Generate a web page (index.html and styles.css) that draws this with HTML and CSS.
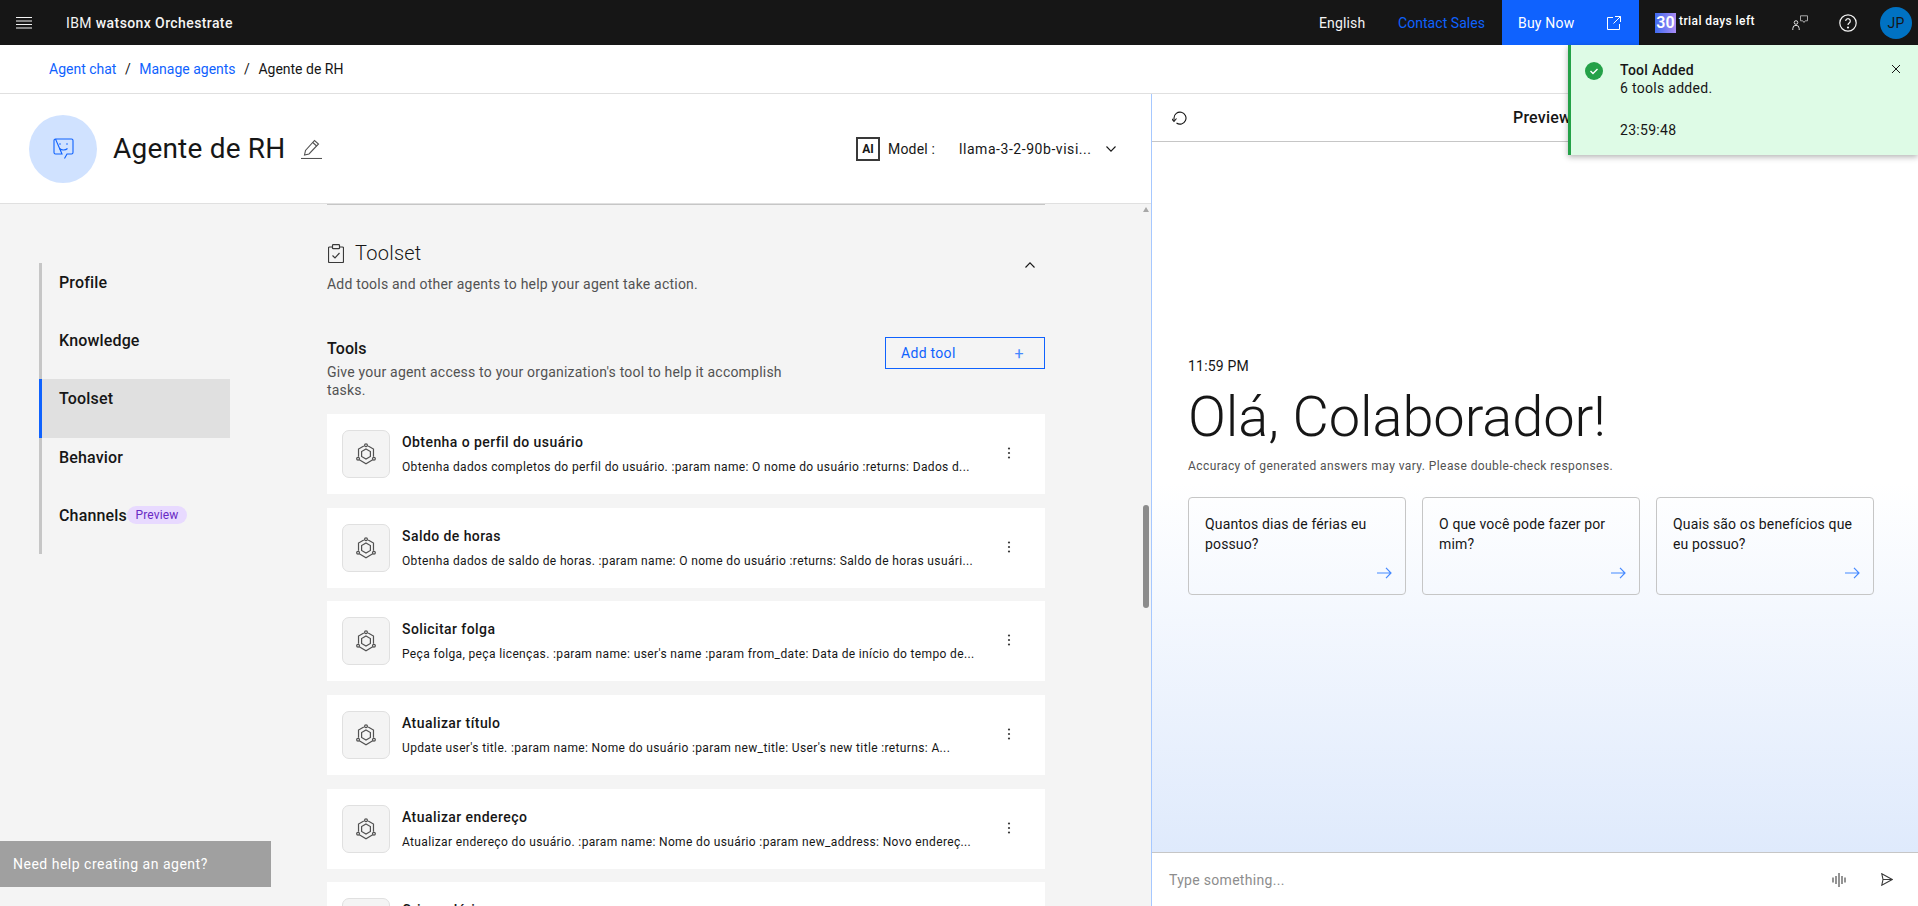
FILE: index.html
```html
<!DOCTYPE html>
<html lang="en">
<head>
<meta charset="utf-8">
<title>Agente de RH</title>
<link rel="stylesheet" href="styles.css">
</head>
<body>
<header class="topbar">
  <svg class="hamburger" width="16" height="12" viewBox="0 0 16 12"><path d="M0 .5h16M0 4h16M0 7.500h16M0 11h16" stroke="#f4f4f4" stroke-width="1"/></svg>
  <div class="brand">IBM <b>watsonx Orchestrate</b></div>
  <div class="top-right">
    <span class="lang">English</span>
    <span class="contact">Contact Sales</span>
    <div class="buy"><span>Buy Now</span>
      <svg width="14" height="14" viewBox="0 0 14 14" fill="none" stroke="#fff"><path d="M6 1.500H.5v12h12V8M8 .5h5.500V6M13.500 .5 6.500 7.500"/></svg>
    </div>
    <div class="trial"><span class="days">30</span><span class="trial-text">trial days left</span></div>
    <svg class="ic-people" width="16" height="16" viewBox="0 0 16 16" fill="none" stroke="#e0e0e0"><circle cx="4" cy="7.500" r="1.800"/><path d="M.8 15v-1.500a3.200 3.200 0 0 1 6.400 0V15"/><path d="M8.500 .8h7v5h-2.300L12 7.500l-1.200-1.700H8.500z" stroke="#a8a8a8"/></svg>
    <svg class="ic-help" width="18" height="18" viewBox="0 0 18 18" fill="none" stroke="#f4f4f4" stroke-width="1.200"><circle cx="9" cy="9" r="8.200"/><path d="M6.700 7a2.300 2.300 0 1 1 3.500 2c-.8.500-1.200 1-1.200 2"/><circle cx="9" cy="13.500" r=".5" fill="#f4f4f4"/></svg>
    <div class="avatar">JP</div>
  </div>
</header>

<nav class="crumbs">
  <a>Agent chat</a><i>/</i><a>Manage agents</a><i>/</i><span>Agente de RH</span>
</nav>

<main class="split">
  <section class="editor">
    <div class="agent-head">
      <div class="agent-badge">
        <svg width="21" height="21" viewBox="0 0 21 21" fill="none" stroke="#0f62fe" stroke-width="1.100"><path d="M2.500 1h16A1.500 1.500 0 0 1 20 2.500v12a1.500 1.500 0 0 1-1.500 1.500H14l-2.500 4.500M9 16H2.500A1.500 1.500 0 0 1 1 14.500v-12A1.500 1.500 0 0 1 2.500 1z"/><path d="M6.500 10.500c2 2 6 2 8 0"/><circle cx="7" cy="6" r=".8" fill="#0f62fe" stroke="none"/><circle cx="14" cy="6" r=".8" fill="#0f62fe" stroke="none"/></svg>
      </div>
      <h1>Agente de RH</h1>
      <svg class="pen" width="21" height="20" viewBox="0 0 21 20" fill="none" stroke="#525252" stroke-width="1.100"><path d="M0 19.500h21"/><path d="M3.500 16l1-4.500L13.500 1.500 17.500 5 8 15z"/><path d="M11.800 3.500l3.800 3.500"/></svg>
      <div class="model">
        <span class="ai">AI</span>
        <span class="model-label">Model :</span>
        <span class="model-name">llama-3-2-90b-visi...</span>
        <svg width="10" height="6" viewBox="0 0 10 6" fill="none" stroke="#161616" stroke-width="1.100"><path d="M.5.5 5 5.200 9.500.5"/></svg>
      </div>
    </div>

    <div class="editor-body">
      <aside class="side">
        <ul class="side-nav">
          <li>Profile</li>
          <li>Knowledge</li>
          <li class="active">Toolset</li>
          <li>Behavior</li>
          <li>Channels<span class="tag">Preview</span></li>
        </ul>
      </aside>

      <div class="column">
        <div class="sec-head">
          <div class="sec-title">
            <svg width="16" height="19" viewBox="0 0 16 19" fill="none" stroke="#393939" stroke-width="1.200"><path d="M4.500 3H1.500a1 1 0 0 0-1 1v13.500a1 1 0 0 0 1 1h13a1 1 0 0 0 1-1V4a1 1 0 0 0-1-1h-3"/><rect x="4.500" y=".7" width="7" height="4" rx=".8"/><path d="m4.500 11.500 2.500 2.500 4.500-5"/></svg>
            <h2>Toolset</h2>
            <svg class="collapse" width="10" height="6" viewBox="0 0 10 6" fill="none" stroke="#161616" stroke-width="1.100"><path d="M.5 5.500 5 .8l4.500 4.700"/></svg>
          </div>
          <p class="muted">Add tools and other agents to help your agent take action.</p>
        </div>

        <div class="tools-head">
          <div class="tools-intro">
            <h3>Tools</h3>
            <p class="muted">Give your agent access to your organization's tool to help it accomplish tasks.</p>
          </div>
          <button class="add-btn"><span>Add tool</span><em>+</em></button>
        </div>

        <div class="cards">
          <article class="card">
            <div class="tool-ic"><svg width="22" height="22" viewBox="0 0 20 20" fill="none" stroke="#525252" stroke-width="1.100"><path d="M10 5.500 14 7.800v4.400L10 14.500 6 12.200V7.800z"/><path d="M8 2.800 3.200 5.500v7M12 2.800l4.800 2.700v7M3.900 15.300 10 18.800l6.100-3.500"/><circle cx="10" cy="2" r="1.300"/><circle cx="2.800" cy="14.300" r="1.300"/><circle cx="17.200" cy="14.300" r="1.300"/></svg></div>
            <div class="card-text"><h4>Obtenha o perfil do usuário</h4><p>Obtenha dados completos do perfil do usuário. :param name: O nome do usuário :returns: Dados d...</p></div>
            <svg class="kebab" width="4" height="12" viewBox="0 0 4 12" fill="#393939"><circle cx="2" cy="1.500" r="1.100"/><circle cx="2" cy="6" r="1.100"/><circle cx="2" cy="10.500" r="1.100"/></svg>
          </article>
          <article class="card">
            <div class="tool-ic"><svg width="22" height="22" viewBox="0 0 20 20" fill="none" stroke="#525252" stroke-width="1.100"><path d="M10 5.500 14 7.800v4.400L10 14.500 6 12.200V7.800z"/><path d="M8 2.800 3.200 5.500v7M12 2.800l4.800 2.700v7M3.900 15.300 10 18.800l6.100-3.500"/><circle cx="10" cy="2" r="1.300"/><circle cx="2.800" cy="14.300" r="1.300"/><circle cx="17.200" cy="14.300" r="1.300"/></svg></div>
            <div class="card-text"><h4>Saldo de horas</h4><p>Obtenha dados de saldo de horas. :param name: O nome do usuário :returns: Saldo de horas usuári...</p></div>
            <svg class="kebab" width="4" height="12" viewBox="0 0 4 12" fill="#393939"><circle cx="2" cy="1.500" r="1.100"/><circle cx="2" cy="6" r="1.100"/><circle cx="2" cy="10.500" r="1.100"/></svg>
          </article>
          <article class="card">
            <div class="tool-ic"><svg width="22" height="22" viewBox="0 0 20 20" fill="none" stroke="#525252" stroke-width="1.100"><path d="M10 5.500 14 7.800v4.400L10 14.500 6 12.200V7.800z"/><path d="M8 2.800 3.200 5.500v7M12 2.800l4.800 2.700v7M3.900 15.300 10 18.800l6.100-3.500"/><circle cx="10" cy="2" r="1.300"/><circle cx="2.800" cy="14.300" r="1.300"/><circle cx="17.200" cy="14.300" r="1.300"/></svg></div>
            <div class="card-text"><h4>Solicitar folga</h4><p>Peça folga, peça licenças. :param name: user's name :param from_date: Data de início do tempo de...</p></div>
            <svg class="kebab" width="4" height="12" viewBox="0 0 4 12" fill="#393939"><circle cx="2" cy="1.500" r="1.100"/><circle cx="2" cy="6" r="1.100"/><circle cx="2" cy="10.500" r="1.100"/></svg>
          </article>
          <article class="card">
            <div class="tool-ic"><svg width="22" height="22" viewBox="0 0 20 20" fill="none" stroke="#525252" stroke-width="1.100"><path d="M10 5.500 14 7.800v4.400L10 14.500 6 12.200V7.800z"/><path d="M8 2.800 3.200 5.500v7M12 2.800l4.800 2.700v7M3.900 15.300 10 18.800l6.100-3.500"/><circle cx="10" cy="2" r="1.300"/><circle cx="2.800" cy="14.300" r="1.300"/><circle cx="17.200" cy="14.300" r="1.300"/></svg></div>
            <div class="card-text"><h4>Atualizar título</h4><p>Update user's title. :param name: Nome do usuário :param new_title: User's new title :returns: A...</p></div>
            <svg class="kebab" width="4" height="12" viewBox="0 0 4 12" fill="#393939"><circle cx="2" cy="1.500" r="1.100"/><circle cx="2" cy="6" r="1.100"/><circle cx="2" cy="10.500" r="1.100"/></svg>
          </article>
          <article class="card">
            <div class="tool-ic"><svg width="22" height="22" viewBox="0 0 20 20" fill="none" stroke="#525252" stroke-width="1.100"><path d="M10 5.500 14 7.800v4.400L10 14.500 6 12.200V7.800z"/><path d="M8 2.800 3.200 5.500v7M12 2.800l4.800 2.700v7M3.900 15.300 10 18.800l6.100-3.500"/><circle cx="10" cy="2" r="1.300"/><circle cx="2.800" cy="14.300" r="1.300"/><circle cx="17.200" cy="14.300" r="1.300"/></svg></div>
            <div class="card-text"><h4>Atualizar endereço</h4><p>Atualizar endereço do usuário. :param name: Nome do usuário :param new_address: Novo endereç...</p></div>
            <svg class="kebab" width="4" height="12" viewBox="0 0 4 12" fill="#393939"><circle cx="2" cy="1.500" r="1.100"/><circle cx="2" cy="6" r="1.100"/><circle cx="2" cy="10.500" r="1.100"/></svg>
          </article>
          <article class="card">
            <div class="tool-ic"></div>
            <div class="card-text"><h4>Criar salário</h4><p></p></div>
          </article>
        </div>
      </div>
      <div class="scroll-up"></div>
      <div class="scroll-thumb"></div>
      <button class="help-btn">Need help creating an agent?</button>
    </div>
  </section>

  <section class="preview">
    <div class="preview-head">
      <svg width="15" height="15" viewBox="0 0 15 15" fill="none" stroke="#161616" stroke-width="1.100"><path d="M4.500 13a6 6 0 1 0-2.500-5v3"/><path d="M-.5 8.500 2 11.500 4.500 8.500"/></svg>
      <span>Preview</span>
    </div>
    <div class="chat">
      <div class="time">11:59 PM</div>
      <div class="hello">Olá, Colaborador!</div>
      <p class="notice">Accuracy of generated answers may vary. Please double-check responses.</p>
      <div class="prompts">
        <div class="prompt">Quantos dias de férias eu possuo?<svg width="15" height="12" viewBox="0 0 15 12" fill="none" stroke="#4589ff" stroke-width="1.200"><path d="M0 6h14M9 .8 14 6 9 11.200"/></svg></div>
        <div class="prompt">O que você pode fazer por mim?<svg width="15" height="12" viewBox="0 0 15 12" fill="none" stroke="#4589ff" stroke-width="1.200"><path d="M0 6h14M9 .8 14 6 9 11.200"/></svg></div>
        <div class="prompt">Quais são os benefícios que eu possuo?<svg width="15" height="12" viewBox="0 0 15 12" fill="none" stroke="#4589ff" stroke-width="1.200"><path d="M0 6h14M9 .8 14 6 9 11.200"/></svg></div>
      </div>
    </div>
    <div class="composer">
      <span class="placeholder">Type something...</span>
      <svg class="voice" width="14" height="14" viewBox="0 0 14 14" stroke="#7a7a7a" stroke-width="1.600"><path d="M1 4.500v5M4 3v8M7 0v14M10 3v8M13 4.500v5"/></svg>
      <svg class="send" width="12" height="13" viewBox="0 0 12 13" fill="none" stroke="#393939" stroke-width="1.100"><path d="M.8.8 11.300 6.500.8 12.200 2 6.500zM2 6.500h9.300"/></svg>
    </div>
  </section>
</main>

<aside class="toast">
  <svg class="toast-check" width="18" height="18" viewBox="0 0 18 18"><circle cx="9" cy="9" r="9" fill="#24a148"/><path d="m5.500 9 2.500 2.500 4.500-4.500" fill="none" stroke="#fff" stroke-width="1.400"/></svg>
  <div class="toast-body">
    <strong>Tool Added</strong>
    <span>6 tools added.</span>
    <time>23:59:48</time>
  </div>
  <svg class="toast-close" width="10" height="10" viewBox="0 0 10 10" stroke="#161616" stroke-width="1"><path d="M1 1l8 8M9 1 1 9"/></svg>
</aside>
</body>
</html>
```

FILE: styles.css
```css
* { box-sizing: border-box; }
html, body { margin: 0; height: 100%; }
body {
  display: flex;
  flex-direction: column;
  height: 906px;
  overflow: hidden;
  font-family: Roboto, "Noto Sans", sans-serif;
  color: #161616;
  background: #fff;
  font-size: 14px;
  letter-spacing: .2px;
}
h1, h2, h3, h4, p, ul { margin: 0; padding: 0; font-weight: 400; }

.topbar {
  flex: 0 0 45px;
  display: flex;
  align-items: center;
  background: #161616;
  color: #f4f4f4;
  padding-left: 16px;
}
.hamburger { flex: none; }
.brand { margin-left: 34px; font-size: 14px; letter-spacing: .4px; }
.brand b { font-weight: 500; }
.top-right { margin-left: auto; display: flex; align-items: center; height: 100%; }
.lang { width: 45px; white-space: nowrap; letter-spacing: .15px; }
.contact { margin-left: 34px; width: 87px; color: #0f62fe; white-space: nowrap; letter-spacing: .05px; }
.buy {
  margin-left: 17px;
  width: 137px;
  height: 100%;
  background: #0f62fe;
  color: #fff;
  display: flex;
  align-items: center;
  justify-content: space-between;
  padding: 0 18px 0 16px;
}
.trial { margin-left: 16px; display: flex; align-items: flex-start; width: 100px; }
.days {
  width: 22px;
  height: 20px;
  background: linear-gradient(90deg, #3f6bf0, #a98bf5);
  color: #fff;
  font-size: 16px;
  font-weight: 600;
  text-align: center;
  line-height: 20px;
  letter-spacing: 0;
}
.trial-text { margin-left: 3px; font-size: 12px; line-height: 16px; white-space: nowrap; color: #fff; font-weight: 500; letter-spacing: .42px; }
.ic-people { margin-left: 37px; }
.ic-help { margin-left: 31px; }
.avatar {
  margin-left: 23px;
  margin-right: 6px;
  width: 32px;
  height: 32px;
  border-radius: 50%;
  background: #0072c3;
  color: #161616;
  font-size: 14px;
  text-align: center;
  line-height: 32px;
}

.crumbs {
  flex: 0 0 49px;
  display: flex;
  align-items: center;
  padding: 0 0 0 49px;
  border-bottom: 1px solid #e0e0e0;
  white-space: nowrap;
  letter-spacing: 0;
}
.crumbs a { color: #0f62fe; }
.crumbs i { font-style: normal; margin: 0 8.500px; }

.split { flex: 1; display: flex; min-height: 0; }
.editor {
  flex: 0 0 1152px;
  display: flex;
  flex-direction: column;
  border-right: 1px solid #a6c8ff;
  min-height: 0;
}
.agent-head {
  flex: 0 0 110px;
  display: flex;
  align-items: center;
  padding-left: 29px;
  border-bottom: 1px solid #e0e0e0;
}
.agent-badge {
  width: 68px;
  height: 68px;
  border-radius: 50%;
  background: #d0e2ff;
  display: flex;
  align-items: center;
  justify-content: center;
}
.agent-head h1 { margin-left: 16px; font-size: 28px; font-weight: 400; letter-spacing: .2px; white-space: nowrap; width: 172px; }
.pen { margin-left: 16px; }
.model { margin-left: auto; display: flex; align-items: center; padding-right: 35px; }
.ai {
  width: 24px;
  height: 24px;
  border: 2px solid #393939;
  font-size: 12px;
  font-weight: 700;
  line-height: 20px;
  text-align: center;
  letter-spacing: 0;
}
.model-label { margin-left: 8px; width: 71px; }
.model-name { width: 147px; white-space: nowrap; letter-spacing: .55px; }

.editor-body {
  flex: 1;
  position: relative;
  display: flex;
  background: #f4f4f4;
  min-height: 0;
  overflow: hidden;
}
.side { flex: 0 0 327px; padding: 59px 0 0 39px; }
.side-nav {
  list-style: none;
  width: 191px;
  height: 291px;
  border-left: 3px solid #c6c6c6;
}
.side-nav li {
  height: 58.200px;
  padding: 9px 0 0 17px;
  font-size: 16px;
  line-height: 22px;
  font-weight: 500;
  letter-spacing: .16px;
  white-space: nowrap;
}
.side-nav .active { background: #e0e0e0; box-shadow: -3px 0 0 #0f62fe; }
.tag {
  display: inline-block;
  vertical-align: 2px;
  height: 18px;
  padding: 0 8.500px;
  border-radius: 9px;
  background: #e8daff;
  color: #6929c4;
  font-size: 12px;
  font-weight: 400;
  line-height: 18px;
}

.column { flex: 0 0 718px; border-top: 2px solid #c6c6c6; margin-top: -1px; }
.sec-head { padding-top: 37px; }
.sec-title { display: flex; align-items: center; height: 22px; padding-left: 1px; }
.sec-title h2 { margin-left: 11px; font-size: 20px; font-weight: 300; letter-spacing: .25px; }
.collapse { margin-left: auto; margin-right: 10px; margin-top: 24px; }
.muted { color: #525252; line-height: 18px; letter-spacing: .21px; }
.sec-head .muted { margin-top: 11px; }

.tools-head { display: flex; justify-content: space-between; margin-top: 45px; }
.tools-intro { width: 480px; }
.tools-intro h3 { font-size: 16px; font-weight: 500; line-height: 22px; letter-spacing: .1px; }
.tools-intro .muted { margin-top: 3px; }
.add-btn {
  width: 160px;
  height: 32px;
  margin-top: -1px;
  display: flex;
  align-items: center;
  justify-content: space-between;
  padding: 0 20px 0 15px;
  background: transparent;
  border: 1px solid #0f62fe;
  color: #0f62fe;
  font: inherit;
  letter-spacing: .3px;
}
.add-btn em { font-style: normal; font-size: 16px; color: #4589ff; }

.cards { margin-top: 15px; display: flex; flex-direction: column; gap: 13.670px; }
.card {
  flex: none;
  height: 80px;
  background: #fff;
  display: flex;
  align-items: center;
  padding-left: 15px;
}
.tool-ic {
  flex: none;
  width: 48px;
  height: 48px;
  border-radius: 7px;
  background: #f4f4f4;
  border: 1px solid #e0e0e0;
  display: flex;
  align-items: center;
  justify-content: center;
}
.card-text { margin-left: 12px; width: 590px; }
.card-text h4 { font-size: 14px; font-weight: 500; line-height: 18px; letter-spacing: .43px; }
.card-text p { margin-top: 8px; min-height: 16px; font-size: 12px; line-height: 16px; white-space: nowrap; letter-spacing: .36px; }
.kebab { margin-left: 15px; margin-top: -2px; }

.scroll-up {
  position: absolute;
  left: 1143px;
  top: 3px;
  border: 3.500px solid transparent;
  border-top: 0;
  border-bottom: 5px solid #a8a8a8;
}
.scroll-thumb {
  position: absolute;
  left: 1143px;
  top: 301px;
  width: 6px;
  height: 103px;
  border-radius: 3px;
  background: #8c8c8c;
}
.help-btn {
  position: absolute;
  left: 0;
  top: 637px;
  width: 271px;
  height: 46px;
  border: 0;
  background: #a0a0a0;
  color: #fff;
  font: inherit;
  text-align: left;
  padding: 0 13px;
  letter-spacing: .5px;
}

.preview { flex: 1; display: flex; flex-direction: column; min-width: 0; }
.preview-head {
  flex: 0 0 48px;
  display: flex;
  align-items: center;
  padding-left: 20px;
  border-bottom: 1px solid #c6c6c6;
}
.preview-head span { margin-left: 326px; font-size: 16px; font-weight: 500; }
.chat {
  flex: 1;
  padding: 215px 0 0 36px;
  background: linear-gradient(180deg, #fff 48%, #dfeafc 100%);
}
.time { line-height: 18px; }
.hello { margin-top: 7px; font-size: 56px; font-weight: 300; line-height: 70px; letter-spacing: -.1px; white-space: nowrap; }
.notice { margin-top: 6px; font-size: 12px; line-height: 16px; color: #525252; letter-spacing: .42px; white-space: nowrap; }
.prompts { margin-top: 23px; display: flex; gap: 16px; }
.prompt {
  position: relative;
  width: 218px;
  height: 98px;
  padding: 16px 16px 0;
  background: transparent;
  border: 1px solid #c6c6c6;
  border-radius: 4px;
  font-size: 14px;
  line-height: 20px;
  letter-spacing: .14px;
}
.prompt svg { position: absolute; right: 13px; bottom: 15px; }
.composer {
  flex: 0 0 54px;
  display: flex;
  align-items: center;
  padding-left: 17px;
  background: #fff;
  border-top: 1px solid #c6c6c6;
}
.placeholder { color: #8d8d8d; letter-spacing: .3px; }
.voice { margin-left: auto; }
.send { margin-left: 35px; margin-right: 25px; }

.toast {
  position: absolute;
  left: 1568px;
  top: 45px;
  width: 350px;
  height: 110px;
  display: flex;
  align-items: flex-start;
  background: #defbe6;
  border-left: 3px solid #24a148;
  box-shadow: 0 2px 6px rgba(0, 0, 0, .3);
  padding: 17px 0 0 14px;
}
.toast-check { flex: none; }
.toast-body { margin-left: 17px; display: flex; flex-direction: column; line-height: 18px; letter-spacing: .3px; color: #161616; }
.toast-body strong { font-weight: 500; margin-top: -1px; }
.toast-body time { margin-top: 24px; }
.toast-close { margin-left: auto; margin-right: 17px; margin-top: 2px; }
```
